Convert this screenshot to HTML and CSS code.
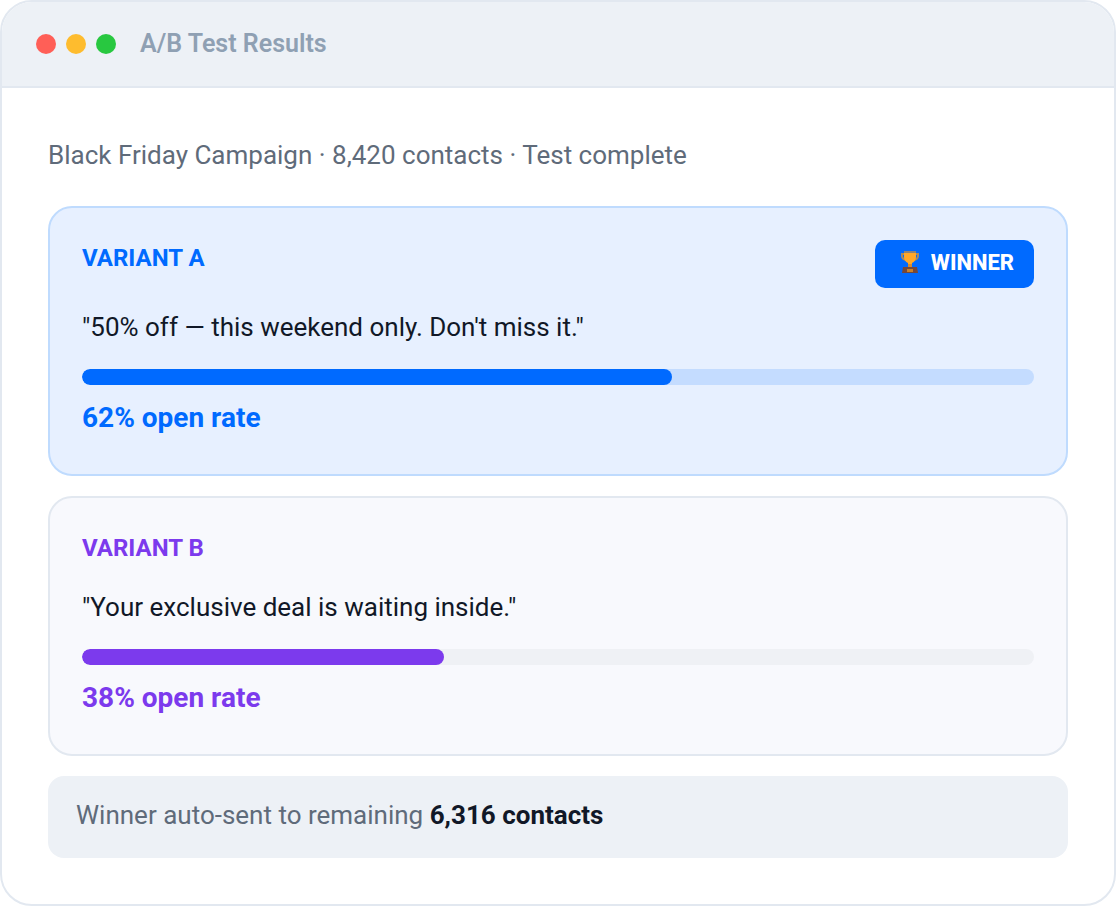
FILE: index.html
```html
<!DOCTYPE html>
<html lang="en">
  <head>
    <meta charset="UTF-8" />
    <meta name="viewport" content="width=device-width, initial-scale=1.0" />
    <title>A/B Test Results</title>
    <link rel="stylesheet" href="styles.css">
  </head>
  <body>
    <main class="window">
      <!-- title bar -->
      <header class="window-bar">
        <div class="dots">
          <span class="dot red"></span>
          <span class="dot yellow"></span>
          <span class="dot green"></span>
        </div>
        <h1 class="window-title">A/B Test Results</h1>
      </header>

      <div class="window-body">
        <p class="summary">Black Friday Campaign · 8,420 contacts · Test complete</p>

        <!-- variants -->
        <section class="variant variant-a">
          <div class="variant-head">
            <h2 class="variant-label">VARIANT A</h2>
            <span class="badge">
              <svg class="trophy" viewBox="0 0 30 24" aria-hidden="true">
                <path d="M11 3H7v2q0 3 4 4M19 3h4v2q0 3-4 4" fill="none" stroke="#a98a5c" stroke-width="2" />
                <path d="M9 1h12v5q0 4-4 6v5h-4v-5q-4-2-4-6z" fill="#ffa828" />
                <path d="M9 0h12v2H9z" fill="#8d8478" />
                <path d="M13 13h4v4h-4z" fill="#d08a35" />
                <path d="M8 16h14l1 6H7z" fill="#74473a" />
                <path d="M12 18h6v3h-6z" fill="#c98228" />
              </svg>
              WINNER
            </span>
          </div>
          <p class="quote">"50% off — this weekend only. Don't miss it."</p>
          <div class="bar"><div class="fill" style="width: 62%"></div></div>
          <p class="rate">62% open rate</p>
        </section>

        <section class="variant variant-b">
          <div class="variant-head">
            <h2 class="variant-label">VARIANT B</h2>
          </div>
          <p class="quote">"Your exclusive deal is waiting inside."</p>
          <div class="bar"><div class="fill" style="width: 38%"></div></div>
          <p class="rate">38% open rate</p>
        </section>

        <p class="note">Winner auto-sent to remaining <strong>6,316 contacts</strong></p>
      </div>
    </main>
  </body>
</html>
```
FILE: styles.css
```css
* {
  box-sizing: border-box;
}
body {
  margin: 0;
  background: #fff;
  color: #111827;
  font-family: Roboto, "Liberation Sans", sans-serif;
  font-size: 26px;
}
h1,
h2,
p {
  margin: 0;
}

/* window */
.window {
  border: 2px solid #e2e8f0;
  border-radius: 32px;
  overflow: hidden;
  background: #fff;
}
.window-bar {
  display: flex;
  align-items: center;
  gap: 24px;
  padding: 28px 34px;
  background: #edf1f6;
  border-bottom: 2px solid #e2e8f0;
}
.dots {
  display: flex;
  gap: 10px;
}
.dot {
  width: 20px;
  height: 20px;
  border-radius: 50%;
}
.red {
  background: #ff5f57;
}
.yellow {
  background: #febc2e;
}
.green {
  background: #28c840;
}
.window-title {
  font-size: 25px;
  font-weight: 600;
  line-height: 28px;
  color: #8fa0b3;
}
.window-body {
  padding: 46px;
}
.summary {
  margin-bottom: 30px;
  line-height: 42px;
  color: #5f6b7a;
}

/* variant cards */
.variant {
  margin-bottom: 20px;
  padding: 32px;
  border: 2px solid #e2e8f0;
  border-radius: 24px;
  background: #f8f9fd;
}
.variant-head {
  display: flex;
  justify-content: space-between;
  align-items: flex-start;
  min-height: 38px;
}
.variant-label {
  font-size: 24px;
  font-weight: 700;
  line-height: 36px;
}
.badge {
  display: flex;
  align-items: center;
  gap: 6px;
  padding: 6px 20px 8px;
  border-radius: 10px;
  background: #006aff;
  color: #fff;
  font-size: 22px;
  font-weight: 800;
  line-height: 34px;
}
.trophy {
  width: 30px;
  height: 24px;
}
.quote {
  margin: 18px 0 20px;
  line-height: 43px;
}
.bar {
  height: 16px;
  border-radius: 8px;
  background: #eff1f5;
  overflow: hidden;
}
.fill {
  height: 100%;
  border-radius: 8px;
}
.rate {
  margin-top: 8px;
  font-size: 28px;
  font-weight: 700;
  line-height: 49px;
}

.variant-a {
  background: #e7f0ff;
  border-color: #bfdbfe;
}
.variant-a .variant-label,
.variant-a .rate {
  color: #006aff;
}
.variant-a .bar {
  background: #c4dcff;
}
.variant-a .fill {
  background: #006aff;
}
.variant-b .variant-label,
.variant-b .rate {
  color: #7c3aed;
}
.variant-b .fill {
  background: #7c3aed;
}

/* footer note */
.note {
  padding: 18px 28px 22px;
  border-radius: 16px;
  background: #edf1f6;
  color: #5f6b7a;
  line-height: 42px;
}
.note strong {
  color: #111827;
}
```
